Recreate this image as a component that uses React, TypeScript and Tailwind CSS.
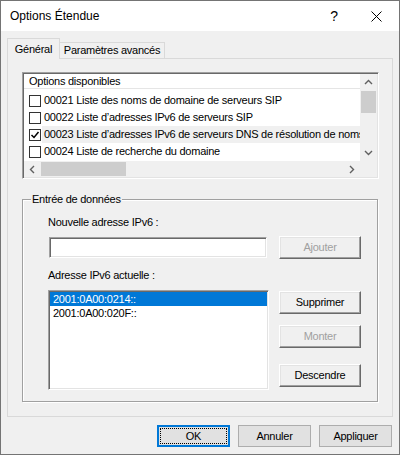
import React from "react";

const sunken =
  "border border-t-[#a0a0a0] border-l-[#a0a0a0] border-b-white border-r-white p-px shadow-[inset_1px_1px_0_#696969,inset_-1px_-1px_0_#e3e3e3]";
const raised =
  "border border-t-white border-l-white border-b-[#696969] border-r-[#696969] bg-[#f0f0f0] shadow-[inset_-1px_-1px_0_#a0a0a0,inset_1px_1px_0_#e3e3e3]";

function Chevron({ dir }: { dir: "up" | "down" | "left" | "right" }) {
  const pts = {
    up: "1,6 4.5,2.5 8,6",
    down: "1,3 4.5,6.5 8,3",
    left: "6,1 2.5,4.5 6,8",
    right: "3,1 6.5,4.5 3,8",
  }[dir];
  return (
    <svg width="9" height="9" viewBox="0 0 9 9">
      <polyline points={pts} fill="none" stroke="#606060" strokeWidth="1.4" />
    </svg>
  );
}

function Check({ on }: { on?: boolean }) {
  return (
    <span className="flex h-[12px] w-[12px] items-center justify-center border border-[#333] bg-white">
      {on && (
        <svg width="10" height="10" viewBox="0 0 10 10">
          <polyline points="1.5,5 4,7.5 8.5,2" fill="none" stroke="#000" strokeWidth="1.5" />
        </svg>
      )}
    </span>
  );
}

const options = [
  { text: "00021 Liste des noms de domaine de serveurs SIP" },
  { text: "00022 Liste d’adresses IPv6 de serveurs SIP" },
  { text: "00023 Liste d’adresses IPv6 de serveurs DNS de résolution de noms", on: true },
  { text: "00024 Liste de recherche du domaine" },
];

function Btn({ label, disabled }: { label: string; disabled?: boolean }) {
  return (
    <button
      className={`${raised} flex h-[23px] w-[82px] items-center justify-center ${
        disabled ? "text-[#a0a0a0]" : "text-black"
      }`}
    >
      {label}
    </button>
  );
}

export default function App() {
  return (
    <div className="flex h-[455px] w-[400px] flex-col border border-[#747474] bg-[#f0f0f0] font-['Liberation_Sans',Arial,sans-serif] text-[11px] tracking-[-0.25px] text-black">
      {/* title bar */}
      <div className="flex h-[30px] items-center bg-white pl-[9px]">
        <span className="text-[12px] tracking-normal">Options Étendue</span>
        <span className="ml-auto mr-[33px] text-[14px] tracking-normal">?</span>
        <svg className="mr-[17px]" width="11" height="11" viewBox="0 0 11 11">
          <path d="M0.5 0.5 L10.5 10.5 M10.5 0.5 L0.5 10.5" stroke="#000" strokeWidth="1" />
        </svg>
      </div>

      <div className="flex flex-col px-[6px] pt-[7px]">
        {/* tabs */}
        <div className="relative z-10 flex items-end">
          <div className="-mb-px flex h-[21px] w-[53px] items-center justify-center border border-b-0 border-[#d9d9d9] bg-[#f0f0f0]">
            Général
          </div>
          <div className="flex h-[16px] w-[105px] items-center justify-center border border-b-0 border-l-0 border-[#d9d9d9] bg-[#f0f0f0]">
            Paramètres avancés
          </div>
        </div>

        {/* panel */}
        <div className="h-[359px] border border-[#d9d9d9] pl-[14px] pt-[13px]">
          {/* options list view */}
          <div className={`${sunken} h-[107px] w-[357px] bg-white`}>
            <div className="grid h-full grid-cols-[1fr_17px] grid-rows-[1fr_16px]">
              <div className="overflow-hidden">
                <div className="flex h-[15px] items-center border-b border-[#e5e5e5] pl-[5px]">
                  Options disponibles
                </div>
                <div className="pt-[3px]">
                  {options.map((o) => (
                    <div key={o.text} className="flex h-[17px] items-center pl-[5px]">
                      <Check on={o.on} />
                      <span
                        className={`ml-[1px] flex h-full flex-1 items-center whitespace-nowrap pl-[2px] ${
                          o.on ? "bg-[#f0f0f0]" : ""
                        }`}
                      >
                        {o.text}
                      </span>
                    </div>
                  ))}
                </div>
              </div>
              <div className="flex flex-col bg-[#f0f0f0]">
                <div className="flex h-[17px] items-center justify-center">
                  <Chevron dir="up" />
                </div>
                <div className="mx-[1px] h-[22px] bg-[#cdcdcd]" />
                <div className="flex-1" />
                <div className="flex h-[17px] items-center justify-center">
                  <Chevron dir="down" />
                </div>
              </div>
              <div className="flex bg-[#f0f0f0]">
                <div className="flex w-[17px] items-center justify-center">
                  <Chevron dir="left" />
                </div>
                <div className="my-[1px] w-[85px] bg-[#cdcdcd]" />
                <div className="flex-1" />
                <div className="flex w-[17px] items-center justify-center">
                  <Chevron dir="right" />
                </div>
              </div>
              <div className="bg-[#f0f0f0]" />
            </div>
          </div>

          {/* group box */}
          <div className="relative mt-[20px] h-[203px] w-[356px] border border-[#a0a0a0] pl-[25px] pt-[16px] shadow-[1px_1px_0_white,inset_1px_1px_0_white]">
            <span className="absolute -top-[7px] left-[8px] bg-[#f0f0f0] px-[1px] leading-[13px]">
              Entrée de données
            </span>
            <div className="h-[13px] leading-[13px]">Nouvelle adresse IPv6 :</div>
            <div className="mt-[7px] flex items-center">
              <div className={`${sunken} ml-px h-[21px] w-[218px] bg-white`} />
              <div className="ml-[12px]">
                <Btn label="Ajouter" disabled />
              </div>
            </div>
            <div className="mt-[10px] h-[13px] leading-[13px]">Adresse IPv6 actuelle :</div>
            <div className="mt-[8px] flex items-start">
              <div className={`${sunken} h-[100px] w-[221px] bg-white`}>
                <div className="flex h-[14px] items-center bg-[#0078d7] pl-[3px] text-white">
                  2001:0A00:0214::
                </div>
                <div className="flex h-[14px] items-center pl-[3px]">2001:0A00:020F::</div>
              </div>
              <div className="ml-[10px] flex flex-col pt-px">
                <Btn label="Supprimer" />
                <div className="mt-[11px]">
                  <Btn label="Monter" disabled />
                </div>
                <div className="mt-[16px]">
                  <Btn label="Descendre" />
                </div>
              </div>
            </div>
          </div>
        </div>

        {/* dialog buttons */}
        <div className="mt-[8px] flex justify-end gap-[8px] pr-px">
          <button className="flex h-[22px] w-[73px] border-2 border-[#0078d7] bg-[#e1e1e1] p-px">
            <span className="flex flex-1 items-center justify-center border border-dotted border-black">
              OK
            </span>
          </button>
          <button className="flex h-[22px] w-[73px] items-center justify-center border border-[#adadad] bg-[#e1e1e1]">
            Annuler
          </button>
          <button className="flex h-[22px] w-[73px] items-center justify-center border border-[#adadad] bg-[#e1e1e1]">
            Appliquer
          </button>
        </div>
      </div>
    </div>
  );
}
